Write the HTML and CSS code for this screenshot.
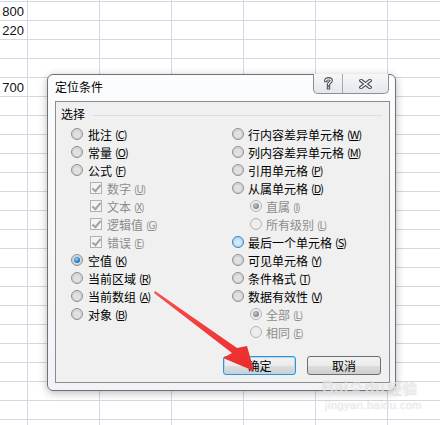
FILE: index.html
```html
<!DOCTYPE html>
<html lang="zh-CN">
<head>
    <meta charset="UTF-8">
    <title>定位条件</title>
    <link rel="stylesheet" href="styles.css">
</head>
<body>
    <div class="sheet">
        <div class="col-a">
            <div class="cell">800</div>
            <div class="cell">220</div>
            <div class="cell"></div>
            <div class="cell"></div>
            <div class="cell">700</div>
        </div>
    </div>

    <div class="dialog">
        <div class="titlebar">
            <span class="title">定位条件</span>
            <div class="caption-btns">
                <span class="cap-btn help">
                    <svg width="9" height="13" viewBox="0 0 9 13">
                        <path d="M1.8 3.6 C1.8 1.2 7.2 1.2 7.2 3.6 C7.2 5.4 4.5 5.6 4.5 7.6" fill="none" stroke="#4b4f55" stroke-width="3.4" stroke-linecap="square"/>
                        <rect x="2.8" y="9.3" width="3.4" height="3.2" fill="#4b4f55"/>
                        <path d="M1.8 3.6 C1.8 1.2 7.2 1.2 7.2 3.6 C7.2 5.4 4.5 5.6 4.5 7.6" fill="none" stroke="#fff" stroke-width="1.2" stroke-linecap="square"/>
                        <rect x="3.9" y="10.3" width="1.2" height="1.2" fill="#fff"/>
                    </svg>
                </span>
                <span class="cap-btn close">
                    <svg width="13" height="10" viewBox="0 0 13 10">
                        <path d="M2 1.5 L11 8.5 M11 1.5 L2 8.5" stroke="#4b4f55" stroke-width="3.6" stroke-linecap="square"/>
                        <path d="M2 1.5 L11 8.5 M11 1.5 L2 8.5" stroke="#fff" stroke-width="1.4" stroke-linecap="square"/>
                    </svg>
                </span>
            </div>
        </div>

        <div class="panel">
            <div class="group-title"><span>选择</span><i></i></div>

            <div class="cols">
                <div class="col left">
                    <div class="row"><span class="radio"></span>批注<span class="key">(<u>C</u>)</span></div>
                    <div class="row"><span class="radio"></span>常量<span class="key">(<u>O</u>)</span></div>
                    <div class="row"><span class="radio"></span>公式<span class="key">(<u>F</u>)</span></div>
                    <div class="row sub off"><span class="check"></span>数字<span class="key">(<u>U</u>)</span></div>
                    <div class="row sub off"><span class="check"></span>文本<span class="key">(<u>X</u>)</span></div>
                    <div class="row sub off"><span class="check"></span>逻辑值<span class="key">(<u>G</u>)</span></div>
                    <div class="row sub off"><span class="check"></span>错误<span class="key">(<u>E</u>)</span></div>
                    <div class="row"><span class="radio on"></span>空值<span class="key">(<u>K</u>)</span></div>
                    <div class="row"><span class="radio"></span>当前区域<span class="key">(<u>R</u>)</span></div>
                    <div class="row"><span class="radio"></span>当前数组<span class="key">(<u>A</u>)</span></div>
                    <div class="row"><span class="radio"></span>对象<span class="key">(<u>B</u>)</span></div>
                </div>
                <div class="col right">
                    <div class="row"><span class="radio"></span>行内容差异单元格<span class="key">(<u>W</u>)</span></div>
                    <div class="row"><span class="radio"></span>列内容差异单元格<span class="key">(<u>M</u>)</span></div>
                    <div class="row"><span class="radio"></span>引用单元格<span class="key">(<u>P</u>)</span></div>
                    <div class="row"><span class="radio"></span>从属单元格<span class="key">(<u>D</u>)</span></div>
                    <div class="row sub off"><span class="radio on"></span>直属<span class="key">(<u>I</u>)</span></div>
                    <div class="row sub off"><span class="radio"></span>所有级别<span class="key">(<u>L</u>)</span></div>
                    <div class="row"><span class="radio hot"></span>最后一个单元格<span class="key">(<u>S</u>)</span></div>
                    <div class="row"><span class="radio"></span>可见单元格<span class="key">(<u>Y</u>)</span></div>
                    <div class="row"><span class="radio"></span>条件格式<span class="key">(<u>T</u>)</span></div>
                    <div class="row"><span class="radio"></span>数据有效性<span class="key">(<u>V</u>)</span></div>
                    <div class="row sub off"><span class="radio on"></span>全部<span class="key">(<u>L</u>)</span></div>
                    <div class="row sub off"><span class="radio"></span>相同<span class="key">(<u>E</u>)</span></div>
                </div>
            </div>

            <div class="buttons">
                <button class="btn default">确定</button>
                <button class="btn">取消</button>
            </div>
        </div>
    </div>

    <svg class="arrow" width="440" height="425" viewBox="0 0 440 425">
        <defs>
            <linearGradient id="red" x1="0" y1="0" x2="1" y2="1">
                <stop offset="0" stop-color="#f65050"/>
                <stop offset="1" stop-color="#ea2b2b"/>
            </linearGradient>
        </defs>
        <polygon points="155,291 237,348 247,346 254,371 223,358 232,353 154,293" fill="url(#red)"/>
    </svg>

    <div class="watermark">
        <div class="wm-logo">Bai<svg width="14" height="14" viewBox="0 0 14 14"><circle cx="3" cy="5" r="1.8"/><circle cx="6" cy="2.5" r="1.8"/><circle cx="9.5" cy="2.8" r="1.8"/><circle cx="11.8" cy="6" r="1.7"/><ellipse cx="7" cy="10" rx="3.6" ry="3"/></svg>du<span class="wm-cn">经验</span></div>
        <div class="wm-url">jingyan.baidu.com</div>
    </div>
</body>
</html>
```

FILE: styles.css
```css
body {
    margin: 0;
    padding: 0;
    width: 440px;
    height: 425px;
    overflow: hidden;
    background-color: #ffffff;
    font-family: "Noto Sans CJK SC", "Liberation Sans", sans-serif;
    position: relative;
}

/* spreadsheet behind the dialog */
.sheet {
    width: 440px;
    height: 425px;
    background-color: #ffffff;
    background-image:
        linear-gradient(to right, #d3d9e4 1px, transparent 1px),
        linear-gradient(to bottom, #d3d9e4 1px, transparent 1px);
    background-size: 72px 100%, 100% 19px;
    background-position: 27px 0, 0 1px;
}
.col-a {
    width: 27px;
    padding-top: 2px;
}
.cell {
    height: 19px;
    line-height: 19px;
    text-align: right;
    padding-right: 3px;
    font-family: "Liberation Sans", Arial, sans-serif;
    font-size: 13px;
    color: #111;
    white-space: nowrap;
}

/* dialog window */
.dialog {
    position: absolute;
    left: 47px;
    top: 74px;
    width: 349px;
    height: 317px;
    box-sizing: border-box;
    border: 1px solid #6e7175;
    border-radius: 6px;
    background: linear-gradient(to bottom, #fbfcfd, #f1f3f6);
    box-shadow: 0 2px 8px rgba(0, 0, 0, 0.28);
    padding: 0 5px 7px 7px;
    display: flex;
    flex-direction: column;
}
.titlebar {
    height: 26px;
    display: flex;
    align-items: flex-start;
}
.title {
    font-size: 12px;
    line-height: 18px;
    padding-top: 3px;
    color: #000;
}
.caption-btns {
    margin-left: auto;
    margin-right: 1px;
    margin-top: -1px;
    display: flex;
    height: 19px;
    border: 1px solid #8a8f96;
    border-top: none;
    border-radius: 0 0 5px 5px;
    background: linear-gradient(to bottom, #f6f7f9, #e4e7eb);
    overflow: hidden;
}
.cap-btn {
    display: flex;
    align-items: center;
    justify-content: center;
    height: 19px;
}
.cap-btn.help {
    width: 28px;
    border-right: 1px solid #a5aab0;
}
.cap-btn.close {
    width: 45px;
}

/* client area */
.panel {
    flex: 1;
    border: 1px solid #8c8c8c;
    background-color: #f0f0f0;
    padding: 3px 7px 7px 5px;
    display: flex;
    flex-direction: column;
    font-size: 12px;
    color: #000;
}
.group-title {
    display: flex;
    align-items: center;
    height: 18px;
    line-height: 18px;
}
.group-title i {
    flex: 1;
    height: 1px;
    margin-left: 8px;
    margin-top: 2px;
    background-color: #d5dfe5;
}
.cols {
    display: flex;
    margin-top: 2px;
}
.col.left {
    width: 161px;
    margin-left: 10px;
}
.col.right {
    flex: 1;
}
.row {
    height: 18px;
    display: flex;
    align-items: center;
    white-space: nowrap;
}
.row .radio,
.row .check {
    margin-right: 5px;
}
.col.right .row .radio {
    margin-right: 4px;
}
.row.sub {
    padding-left: 19px;
}
.col.right .row.sub {
    padding-left: 18px;
}
.row.off {
    color: #8d8d8d;
}
.key {
    margin-left: 3px;
    font-size: 11px;
    letter-spacing: -1px;
}
.row.sub .key {
    font-size: 10px;
}

/* radio buttons */
.radio {
    width: 12px;
    height: 12px;
    box-sizing: border-box;
    border-radius: 50%;
    border: 1px solid #8e8f8f;
    background: radial-gradient(circle at 50% 55%, #dcdcdc 0, #e4e4e4 40%, #cfcfcf 55%, #f6f6f6 100%);
    position: relative;
    flex-shrink: 0;
}
.radio.on::after {
    content: "";
    position: absolute;
    left: 2px;
    top: 2px;
    width: 6px;
    height: 6px;
    border-radius: 50%;
    background: radial-gradient(circle at 40% 35%, #8fd3ff 0, #2a8ad4 50%, #0c4f8e 100%);
}
.radio.hot {
    border-color: #3c7fb1;
    background: radial-gradient(circle at 50% 55%, #d7effc 0, #bfe2f8 50%, #a7d5f3 60%, #e9f6fd 100%);
}
.row.off .radio {
    border-color: #b5b2b2;
    background: radial-gradient(circle, #f0f0f0 0, #ececec 55%, #f7f7f7 100%);
}
.row.off .radio.on::after {
    background: radial-gradient(circle at 40% 35%, #c4c4c4 0, #8e8e8e 60%, #6f6f6f 100%);
}

/* disabled checked checkboxes */
.check {
    width: 12px;
    height: 12px;
    box-sizing: border-box;
    border: 1px solid #b1b1b1;
    background-color: #f4f4f4;
    position: relative;
    flex-shrink: 0;
}
.check::after {
    content: "";
    position: absolute;
    left: 3px;
    top: 0;
    width: 3px;
    height: 7px;
    border-right: 2px solid #a3a3a3;
    border-bottom: 2px solid #a3a3a3;
    transform: rotate(40deg);
}

/* buttons */
.buttons {
    margin-top: auto;
    display: flex;
    justify-content: flex-end;
    gap: 11px;
    padding-right: 1px;
}
.btn {
    width: 74px;
    height: 19px;
    padding: 0;
    font-family: "Noto Sans CJK SC", sans-serif;
    font-size: 12px;
    line-height: 17px;
    color: #000;
    border: 1px solid #707070;
    border-radius: 3px;
    background: linear-gradient(to bottom, #f2f2f2 0, #ebebeb 50%, #dddddd 51%, #cfcfcf 100%);
}
.btn.default {
    width: 73px;
    border-color: #3c8fd0;
    box-shadow: inset 0 0 0 1px #a6dcf7;
}

/* red annotation arrow */
.arrow {
    position: absolute;
    left: 0;
    top: 0;
    pointer-events: none;
}

/* faint site watermark */
.watermark {
    position: absolute;
    left: 322px;
    top: 378px;
    color: rgba(255, 255, 255, 0.5);
    font-family: "Liberation Sans", sans-serif;
    text-shadow: 0 0 1px rgba(170, 170, 170, 0.55);
    pointer-events: none;
}
.wm-logo {
    display: flex;
    align-items: center;
    font-size: 17px;
    font-weight: bold;
    line-height: 20px;
}
.wm-logo svg {
    fill: rgba(225, 225, 225, 0.6);
    margin: 0 1px;
}
.wm-cn {
    font-family: "Noto Sans CJK SC", sans-serif;
    font-size: 15px;
    margin-left: 2px;
}
.wm-url {
    font-size: 11px;
    line-height: 14px;
    padding-left: 3px;
    letter-spacing: 0.5px;
}
```
